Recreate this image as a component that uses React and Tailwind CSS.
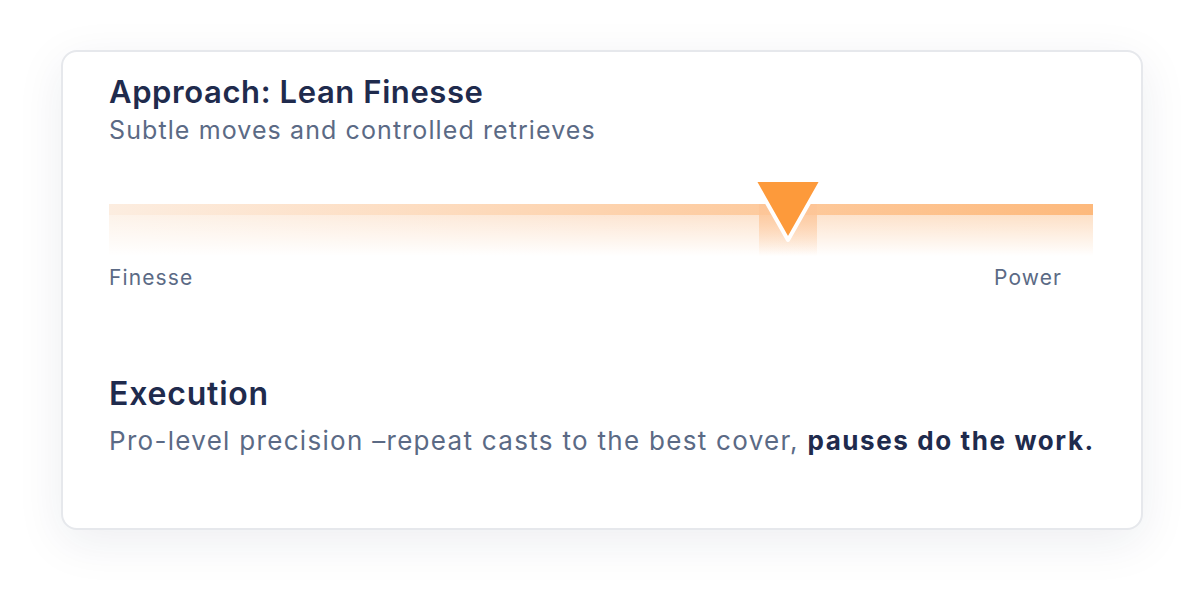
export default function App() {
  const value = 69; // marker position along the track, percent

  return (
    <div className="flex h-[600px] w-full justify-center bg-white pt-[50px] font-['Inter','Noto_Sans',sans-serif]">
      <div className="flex h-[480px] w-[1082px] flex-col rounded-2xl border-2 border-[#e6e8ec] bg-white pl-[46px] pr-[48px] pt-[21px] shadow-[0_12px_48px_rgba(30,41,80,0.08)]">
        <h2 className="text-[31px] font-semibold leading-[38px] tracking-[0.6px] text-[#1f2b4d]">Approach: Lean Finesse</h2>
        <p className="mt-[3px] text-[25px] leading-[32px] tracking-[1.1px] text-[#5b6a85]">Subtle moves and controlled retrieves</p>

        {/* track */}
        <div className="relative mt-[33px] flex flex-col">
          <div className="h-[25px]" />
          <div className="h-[11px] bg-gradient-to-r from-[#fcede0] via-[#fdd3ae] to-[#fdb97c]" />
          <div className="h-[41px] bg-gradient-to-r from-[#fdf3ea] via-[#fde6d3] to-[#fde0c6]">
            <div className="h-full bg-gradient-to-b from-white/0 to-white" />
          </div>

          {/* marker */}
          <div
            className="absolute top-[25px] h-[52px] w-[58px] -translate-x-1/2 bg-gradient-to-b from-[#fdc597] to-white/0"
            style={{ left: `${value}%` }}
          />
          <svg
            className="absolute -top-[1px] -translate-x-1/2"
            style={{ left: `${value}%` }}
            width="78"
            height="68"
            viewBox="0 0 78 68"
          >
            <path
              d="M5 2 L73 2 L39 62 Z"
              fill="#fd9a3b"
              stroke="#ffffff"
              strokeWidth="4"
              strokeLinejoin="round"
            />
          </svg>
        </div>

        <div className="mt-[8px] flex justify-between pr-[31px] text-[21px] leading-[28px] tracking-[1.1px] text-[#5b6a85]">
          <span>Finesse</span>
          <span>Power</span>
        </div>

        <h3 className="mt-[83px] text-[32px] font-semibold leading-[38px] tracking-[0.8px] text-[#1f2b4d]">Execution</h3>
        <p className="mt-[11px] whitespace-nowrap text-[26px] leading-[34px] tracking-[1.3px] text-[#5b6a85]">
          Pro-level precision –repeat casts to the best cover,{" "}
          <span className="font-bold tracking-[1.6px] text-[#1f2b4d]">pauses do the work.</span>
        </p>
      </div>
    </div>
  );
}
